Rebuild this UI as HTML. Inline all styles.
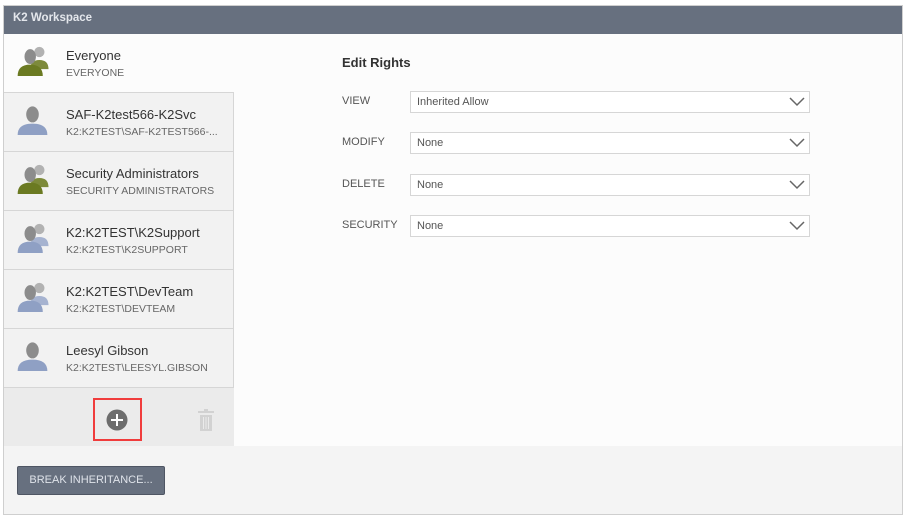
<!DOCTYPE html>
<html><head><style>
*{margin:0;padding:0;box-sizing:border-box}
body{width:907px;height:526px;background:#fff;font-family:"Liberation Sans",sans-serif;position:relative;overflow:hidden}
.frame{position:absolute;left:3px;top:5px;width:900px;height:510px;border:1px solid #cfcfcf;background:#fcfcfc}
.hdr{position:absolute;left:0;top:0;width:898px;height:28px;background:#67707f;color:#e4e7ec;font-size:11.5px;font-weight:bold;padding:6px 0 0 9px}
.list{position:absolute;left:0;top:28px;width:230px}
.item{position:relative;height:59px;border-bottom:1px solid #d6d6d6;border-right:1px solid #d6d6d6;background:#f2f2f2}
.item.sel{background:#fcfcfc;border-right:none}
.item svg{position:absolute;left:10px;top:10px}
.n{position:absolute;left:62px;top:14px;font-size:13px;color:#333}
.s{position:absolute;left:62px;top:33px;font-size:10.5px;color:#666}
.tool{position:absolute;left:0;top:382px;width:230px;height:58px;background:#ebebeb}
.foot{position:absolute;left:0;top:440px;width:898px;height:68px;background:#f4f4f4}
.btn{position:absolute;left:13px;top:20px;width:148px;height:29px;background:#67707f;border:1px solid #4e5563;border-radius:2px;color:#dfe3ea;font-size:11px;text-align:center;line-height:27px}
.er{position:absolute;left:342px;top:55px;font-size:13px;font-weight:bold;color:#333}
.lbl{position:absolute;left:342px;font-size:11px;color:#555}
.sel2{position:absolute;left:410px;width:400px;height:22px;border:1px solid #d6d6d6;background:#fff;font-size:11px;color:#555;padding:4px 0 0 6px}
.sel2 svg{position:absolute;right:4px;top:5px}
</style></head><body>
<div class="frame">
<div class="hdr">K2 Workspace</div>
<div class="list">
<div class="item sel"><svg width="37" height="32" viewBox="0 0 32 28"><circle cx="22" cy="7" r="4.5" fill="#b2b2b2"/><path d="M14 22 Q14 14 22 14 Q30 14 30 22Z" fill="#7d8a3a"/><ellipse cx="14" cy="11" rx="5" ry="6.5" fill="#8c8c8c"/><path d="M3 28 Q3 18 14 18 Q25 18 25 28Z" fill="#6b7a22"/></svg><div class="n">Everyone</div><div class="s">EVERYONE</div></div>
<div class="item"><svg width="37" height="32" viewBox="0 0 32 28"><ellipse cx="16" cy="10" rx="5.5" ry="7" fill="#8c8c8c"/><path d="M3 28 Q3 18 16 18 Q29 18 29 28Z" fill="#8fa0c4"/></svg><div class="n">SAF-K2test566-K2Svc</div><div class="s">K2:K2TEST\SAF-K2TEST566-...</div></div>
<div class="item"><svg width="37" height="32" viewBox="0 0 32 28"><circle cx="22" cy="7" r="4.5" fill="#b2b2b2"/><path d="M14 22 Q14 14 22 14 Q30 14 30 22Z" fill="#7d8a3a"/><ellipse cx="14" cy="11" rx="5" ry="6.5" fill="#8c8c8c"/><path d="M3 28 Q3 18 14 18 Q25 18 25 28Z" fill="#6b7a22"/></svg><div class="n">Security Administrators</div><div class="s">SECURITY ADMINISTRATORS</div></div>
<div class="item"><svg width="37" height="32" viewBox="0 0 32 28"><circle cx="22" cy="7" r="4.5" fill="#b2b2b2"/><path d="M14 22 Q14 14 22 14 Q30 14 30 22Z" fill="#a6b3d0"/><ellipse cx="14" cy="11" rx="5" ry="6.5" fill="#8c8c8c"/><path d="M3 28 Q3 18 14 18 Q25 18 25 28Z" fill="#8fa0c4"/></svg><div class="n">K2:K2TEST\K2Support</div><div class="s">K2:K2TEST\K2SUPPORT</div></div>
<div class="item"><svg width="37" height="32" viewBox="0 0 32 28"><circle cx="22" cy="7" r="4.5" fill="#b2b2b2"/><path d="M14 22 Q14 14 22 14 Q30 14 30 22Z" fill="#a6b3d0"/><ellipse cx="14" cy="11" rx="5" ry="6.5" fill="#8c8c8c"/><path d="M3 28 Q3 18 14 18 Q25 18 25 28Z" fill="#8fa0c4"/></svg><div class="n">K2:K2TEST\DevTeam</div><div class="s">K2:K2TEST\DEVTEAM</div></div>
<div class="item"><svg width="37" height="32" viewBox="0 0 32 28"><ellipse cx="16" cy="10" rx="5.5" ry="7" fill="#8c8c8c"/><path d="M3 28 Q3 18 16 18 Q29 18 29 28Z" fill="#8fa0c4"/></svg><div class="n">Leesyl Gibson</div><div class="s">K2:K2TEST\LEESYL.GIBSON</div></div>
</div>
<div class="tool">
<div style="position:absolute;left:89px;top:10px;width:49px;height:43px;border:2px solid #f03c3c"></div>
<svg style="position:absolute;left:102px;top:21px" width="22" height="22"><circle cx="11" cy="11" r="10.5" fill="#6d6d6d"/><path d="M11 5V17M5 11H17" stroke="#fff" stroke-width="2"/></svg>
<svg style="position:absolute;left:193px;top:20px" width="18" height="24"><rect x="7" y="1" width="4" height="2" fill="#d2d2d2"/><rect x="1" y="3" width="16" height="2" fill="#d2d2d2"/><path d="M3 7H15V23H3Z" fill="#d2d2d2"/><path d="M6.5 9V21M9 9V21M11.5 9V21" stroke="#ebebeb" stroke-width="1"/></svg>
</div>
<div class="foot"><div class="btn">BREAK INHERITANCE...</div></div>
</div>
<div class="er">Edit Rights</div>
<div class="lbl" style="top:95px">VIEW</div><div class="sel2" style="top:91px">Inherited Allow<svg width="16" height="10"><path d="M1 1L8 8L15 1" stroke="#666" stroke-width="1.5" fill="none"/></svg></div>
<div class="lbl" style="top:136px">MODIFY</div><div class="sel2" style="top:132px">None<svg width="16" height="10"><path d="M1 1L8 8L15 1" stroke="#666" stroke-width="1.5" fill="none"/></svg></div>
<div class="lbl" style="top:178px">DELETE</div><div class="sel2" style="top:174px">None<svg width="16" height="10"><path d="M1 1L8 8L15 1" stroke="#666" stroke-width="1.5" fill="none"/></svg></div>
<div class="lbl" style="top:219px">SECURITY</div><div class="sel2" style="top:215px">None<svg width="16" height="10"><path d="M1 1L8 8L15 1" stroke="#666" stroke-width="1.5" fill="none"/></svg></div>
</body></html>
